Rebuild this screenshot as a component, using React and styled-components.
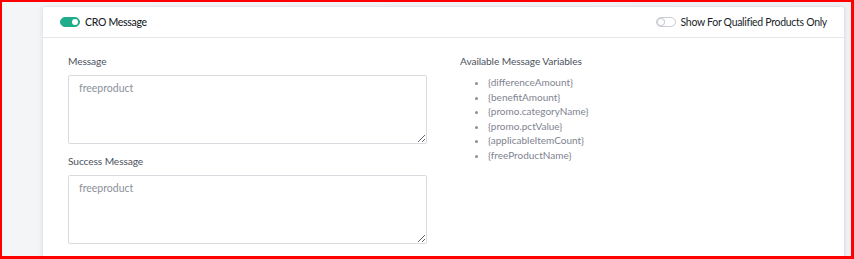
import React from 'react';
import styled, { createGlobalStyle } from 'styled-components';

const GlobalStyle = createGlobalStyle`
  html, body {
    margin: 0;
    padding: 0;
  }
  body {
    font-family: Lato, "Noto Sans", sans-serif;
    background: #fff;
  }
`;

const Frame = styled.div`
  box-sizing: border-box;
  width: 854px;
  height: 259px;
  border-style: solid;
  border-color: #ff0000;
  border-width: 2px 3px 3px 2px;
  background: linear-gradient(90deg, #f4f5f7 0%, #eff0f3 100%);
  padding: 5px 7px 0 41px;
  overflow: hidden;
`;

const Card = styled.section`
  background: #fff;
  border-radius: 2px;
  box-shadow: -2px 0 4px rgba(0, 0, 0, 0.06), 1px 0 3px rgba(0, 0, 0, 0.08);
  min-height: 300px;
`;

const CardHeader = styled.header`
  height: 31px;
  box-sizing: border-box;
  border-bottom: 1px solid #e6e7ea;
  display: flex;
  align-items: center;
  justify-content: space-between;
  padding: 0 17px;
`;

const SwitchLabel = styled.label`
  display: flex;
  align-items: center;
  gap: 5px;
  font-size: 10.5px;
  letter-spacing: -0.3px;
  color: #1a1f2b;
  font-weight: ${p => (p.$strong ? 500 : 400)};
`;

const Switch = styled.span`
  position: relative;
  width: 20px;
  height: 10px;
  border-radius: 6px;
  box-sizing: border-box;
  background: ${p => (p.$on ? '#1fae8c' : '#fff')};
  border: 1px solid ${p => (p.$on ? '#1fae8c' : '#c9ccd2')};

  &::after {
    content: '';
    position: absolute;
    top: 1px;
    left: ${p => (p.$on ? '11px' : '1px')};
    width: 6px;
    height: 6px;
    border-radius: 50%;
    background: #fff;
    box-shadow: ${p => (p.$on ? 'none' : '0 0 0 1px #c9ccd2')};
  }
`;

const CardBody = styled.div`
  display: grid;
  grid-template-columns: 359px 1fr;
  column-gap: 33px;
  padding: 16px 25px 0;
`;

const Column = styled.div`
  display: flex;
  flex-direction: column;
`;

const FieldLabel = styled.div`
  font-size: 10.2px;
  letter-spacing: -0.1px;
  color: #4d5360;
  line-height: 14px;
  margin-bottom: 7px;
`;

const TextArea = styled.textarea`
  box-sizing: border-box;
  width: 359px;
  height: 69px;
  border: 1px solid #d9dbe0;
  border-radius: 2px;
  padding: 6px 10px;
  font-family: inherit;
  font-size: 10.5px;
  color: #4d5360;
  resize: vertical;
  margin: 0 0 ${p => p.$gap || 0}px;
  outline: none;

  &::placeholder {
    color: #8b909a;
  }
`;

const VarList = styled.ul`
  margin: 0;
  padding: 0 0 0 28px;
  list-style: disc;
  color: #7f8490;
  font-size: 10px;
  line-height: 14.6px;

  li::marker {
    color: #8a8f98;
  }
`;

const vars = [
  '{differenceAmount}',
  '{benefitAmount}',
  '{promo.categoryName}',
  '{promo.pctValue}',
  '{applicableItemCount}',
  '{freeProductName}',
];

export default function App() {
  return (
    <Frame>
      <GlobalStyle />
      <Card>
        <CardHeader>
          <SwitchLabel $strong>
            <Switch $on />
            CRO Message
          </SwitchLabel>
          <SwitchLabel>
            <Switch />
            Show For Qualified Products Only
          </SwitchLabel>
        </CardHeader>
        <CardBody>
          <Column>
            <FieldLabel>Message</FieldLabel>
            <TextArea placeholder="freeproduct" $gap={10} />
            <FieldLabel>Success Message</FieldLabel>
            <TextArea placeholder="freeproduct" />
          </Column>
          <Column>
            <FieldLabel>Available Message Variables</FieldLabel>
            <VarList>
              {vars.map(v => (
                <li key={v}>{v}</li>
              ))}
            </VarList>
          </Column>
        </CardBody>
      </Card>
    </Frame>
  );
}
